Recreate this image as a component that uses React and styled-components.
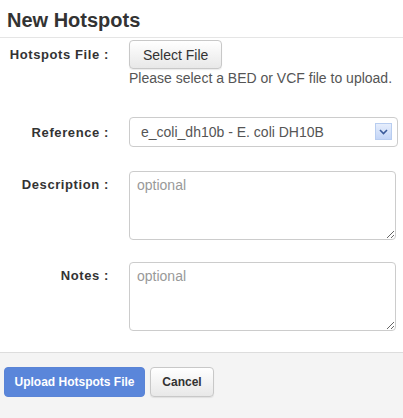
import React from "react";
import styled, { createGlobalStyle } from "styled-components";

const Global = createGlobalStyle`
  html, body {
    margin: 0;
    padding: 0;
    background: #fff;
  }
  body {
    font-family: "Liberation Sans", Arial, sans-serif;
    color: #333;
  }
`;

const Page = styled.div`
  width: 403px;
  height: 418px;
  display: flex;
  flex-direction: column;
  overflow: hidden;
`;

const Header = styled.div`
  padding: 8px 7px 0;
  height: 29px;
  border-bottom: 1px solid #e5e5e5;
`;

const Title = styled.h3`
  margin: 0;
  font-size: 20px;
  line-height: 24px;
  font-weight: bold;
  color: #333;
`;

const Form = styled.div`
  flex: 1;
  display: flex;
  flex-direction: column;
  padding-top: 1px;
`;

const Row = styled.div`
  display: grid;
  grid-template-columns: 109px 1fr;
  column-gap: 20px;
  margin-top: ${(p) => p.$top}px;
`;

const Label = styled.label`
  text-align: right;
  font-size: 13px;
  font-weight: bold;
  color: #333;
  letter-spacing: 0.6px;
  padding-top: ${(p) => p.$pad}px;
`;

const Controls = styled.div`
  display: flex;
  flex-direction: column;
  align-items: flex-start;
`;

const Button = styled.button`
  font-family: "Liberation Sans", Arial, sans-serif;
  font-size: 14px;
  color: #333;
  height: 29px;
  padding: 0 13px;
  white-space: nowrap;
  border: 1px solid #c8c8c8;
  border-radius: 4px;
  background: linear-gradient(#ffffff, #e8e8e8);
  box-shadow: 0 1px 1px rgba(0, 0, 0, 0.08);
  cursor: pointer;
`;

const Help = styled.div`
  margin-top: 1px;
  font-size: 14px;
  color: #555;
  white-space: nowrap;
`;

const SelectWrap = styled.div`
  position: relative;
  width: 269px;
  height: 30px;
`;

const Select = styled.select`
  appearance: none;
  -webkit-appearance: none;
  width: 100%;
  height: 100%;
  box-sizing: border-box;
  padding: 0 30px 0 11px;
  font-family: "Liberation Sans", Arial, sans-serif;
  font-size: 14px;
  color: #555;
  background: #fff;
  border: 1px solid #ccc;
  border-radius: 4px;
`;

const Arrow = styled.span`
  position: absolute;
  right: 6px;
  top: 6px;
  width: 17px;
  height: 17px;
  box-sizing: border-box;
  border: 1px solid #b8cdf0;
  background: linear-gradient(#e6eefc, #c3d5f7);
  display: flex;
  align-items: center;
  justify-content: center;
  pointer-events: none;
`;

const TextArea = styled.textarea`
  width: 267px;
  height: 69px;
  box-sizing: border-box;
  padding: 5px 7px;
  font-family: "Liberation Sans", Arial, sans-serif;
  font-size: 14px;
  color: #555;
  border: 1px solid #ccc;
  border-radius: 4px;
  resize: vertical;
  display: block;
  &::placeholder {
    color: #999;
  }
`;

const Footer = styled.div`
  margin-top: auto;
  height: 66px;
  border-top: 1px solid #ddd;
  background: #f4f4f4;
  display: flex;
  align-items: flex-start;
  gap: 5px;
  padding: 14px 0 0 4px;
  box-sizing: border-box;
`;

const Primary = styled(Button)`
  font-weight: bold;
  color: #fff;
  font-size: 12px;
  padding: 0;
  width: 141px;
  height: 30px;
  border: 1px solid #5a84d6;
  background: #5a86da;
  box-shadow: none;
`;

const Cancel = styled(Button)`
  font-weight: bold;
  font-size: 12px;
  padding: 0;
  width: 64px;
  height: 30px;
`;

export default function App() {
  return (
    <Page>
      <Global />
      <Header>
        <Title>New Hotspots</Title>
      </Header>
      <Form>
        <Row $top={1}>
          <Label $pad={7}>Hotspots File :</Label>
          <Controls>
            <Button>Select File</Button>
            <Help>Please select a BED or VCF file to upload.</Help>
          </Controls>
        </Row>
        <Row $top={31}>
          <Label $pad={8}>Reference :</Label>
          <SelectWrap>
            <Select defaultValue="e_coli_dh10b">
              <option value="e_coli_dh10b">e_coli_dh10b - E. coli DH10B</option>
            </Select>
            <Arrow>
              <svg width="9" height="6" viewBox="0 0 9 6">
                <path d="M1 1 L4.5 4.5 L8 1" fill="none" stroke="#3a5a9a" strokeWidth="1.6" />
              </svg>
            </Arrow>
          </SelectWrap>
        </Row>
        <Row $top={24}>
          <Label $pad={6}>Description :</Label>
          <TextArea placeholder="optional" />
        </Row>
        <Row $top={22}>
          <Label $pad={6}>Notes :</Label>
          <TextArea placeholder="optional" />
        </Row>
      </Form>
      <Footer>
        <Primary>Upload Hotspots File</Primary>
        <Cancel>Cancel</Cancel>
      </Footer>
    </Page>
  );
}
